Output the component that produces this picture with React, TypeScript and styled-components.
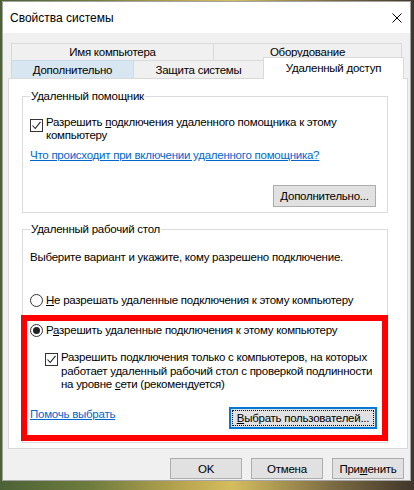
import React from "react";
import styled, { createGlobalStyle } from "styled-components";

const GlobalStyle = createGlobalStyle`
  html, body {
    margin: 0;
    padding: 0;
  }
  body {
    width: 414px;
    height: 490px;
    overflow: hidden;
    background: linear-gradient(
      to right,
      #4c6236 0%,
      #6f7c3e 22%,
      #b9a54f 44%,
      #d4bd5e 56%,
      #7d6c44 80%,
      #40362a 100%
    );
    font-family: "Liberation Sans", Arial, sans-serif;
    font-size: 11.5px;
    letter-spacing: -0.25px;
    color: #000;
  }
`;

const Window = styled.div`
  box-sizing: border-box;
  width: 409px;
  height: 480px;
  margin: 1px 0 0 2px;
  border: 1px solid #a3a3a3;
  background: #f0f0f0;
  display: flex;
  flex-direction: column;
`;

const TitleBar = styled.div`
  height: 31px;
  flex: none;
  background: #fff;
  display: flex;
  align-items: center;
  justify-content: space-between;
  padding: 0 8px 0 7px;
`;

const Title = styled.span`
  font-size: 12px;
  letter-spacing: 0;
  line-height: 14px;
`;

const Body = styled.div`
  padding: 10px 0 0 5px;
`;

const TabStrip = styled.div`
  margin-left: 3px;
  display: flex;
  flex-direction: column;
`;

const TabRow = styled.div<{ $h: number }>`
  display: flex;
  height: ${(p) => p.$h}px;
`;

const Tab = styled.div<{ $w: number; $active?: boolean; $hover?: boolean }>`
  box-sizing: border-box;
  width: ${(p) => p.$w}px;
  border: 1px solid ${(p) => (p.$hover ? "#c9d9e8" : "#d9d9d9")};
  border-bottom: none;
  background: ${(p) => (p.$active ? "#fff" : p.$hover ? "#d8e6f2" : "#f0f0f0")};
  display: flex;
  align-items: center;
  justify-content: center;
  white-space: nowrap;
  line-height: 14px;
  & + & {
    margin-left: -1px;
  }
  ${(p) =>
    p.$active &&
    `
    position: relative;
    z-index: 1;
    height: 22px;
    margin-top: -3px;
    padding-bottom: 1px;
  `}
`;

const Panel = styled.div`
  box-sizing: border-box;
  width: 400px;
  height: 371px;
  border: 1px solid #d9d9d9;
  background: #fff;
  padding-left: 13px;
  overflow: hidden;
`;

const Group = styled.fieldset<{ $top: number }>`
  box-sizing: border-box;
  width: 366px;
  margin: ${(p) => p.$top}px 0 0 0;
  padding: 0 7px 5px;
  border: 1px solid #dcdcdc;
  display: flex;
  flex-direction: column;
  min-width: 0;
`;

const Legend = styled.legend`
  padding: 0 1px;
  line-height: 14px;
`;

const Row = styled.div<{ $top: number; $indent?: number; $lh?: number }>`
  display: flex;
  align-items: flex-start;
  gap: 3px;
  margin-top: ${(p) => p.$top}px;
  margin-left: ${(p) => p.$indent || 0}px;
  line-height: ${(p) => p.$lh || 13}px;
  white-space: nowrap;
`;

const Text = styled.div<{ $top: number }>`
  margin-top: ${(p) => p.$top}px;
  line-height: 14px;
  white-space: nowrap;
`;

const Box = styled.span<{ $top: number }>`
  box-sizing: border-box;
  flex: none;
  width: 13px;
  height: 13px;
  margin-top: ${(p) => p.$top}px;
  border: 1px solid #333;
  background: #fff;
  display: flex;
  align-items: center;
  justify-content: center;
`;

const Radio = styled.span<{ $on?: boolean }>`
  box-sizing: border-box;
  flex: none;
  width: 13px;
  height: 13px;
  margin-top: 1px;
  border: 1px solid #333;
  border-radius: 50%;
  background: #fff;
  display: flex;
  align-items: center;
  justify-content: center;
  &::after {
    content: "";
    display: ${(p) => (p.$on ? "block" : "none")};
    width: 7px;
    height: 7px;
    border-radius: 50%;
    background: #222;
  }
`;

const Link = styled.a<{ $top: number }>`
  align-self: flex-start;
  margin-top: ${(p) => p.$top}px;
  line-height: 14px;
  color: #0066cc;
  text-decoration: underline;
  white-space: nowrap;
  cursor: pointer;
`;

const Button = styled.button<{ $w: number; $h?: number; $default?: boolean }>`
  box-sizing: border-box;
  width: ${(p) => p.$w}px;
  height: ${(p) => p.$h || 22}px;
  padding: 0;
  border: 1px solid ${(p) => (p.$default ? "#0078d7" : "#adadad")};
  background: #e1e1e1;
  font-family: inherit;
  font-size: 11.5px;
  letter-spacing: -0.25px;
  color: #000;
  white-space: nowrap;
  ${(p) =>
    p.$default &&
    `
    box-shadow: inset 0 0 0 1px #0078d7;
    outline: 1px dotted #111;
    outline-offset: -4px;
  `}
`;

const AdvancedButton = styled(Button)`
  align-self: flex-end;
  margin: 23px 4px 0 0;
`;

const Highlight = styled.div`
  margin: 8px -8px -4px -9px;
  border: 6px solid #f00;
  padding: 2px 5px 6px 3px;
  display: flex;
  flex-direction: column;
`;

const ActionRow = styled.div`
  display: flex;
  align-items: center;
  justify-content: space-between;
  margin-top: 15px;
`;

const Footer = styled.div`
  display: flex;
  justify-content: flex-end;
  gap: 9px;
  margin: 9px 6px 0 0;
`;

const CloseIcon = () => (
  <svg width="10" height="10" viewBox="0 0 10 10">
    <path d="M0.5 0.5 L9.5 9.5 M9.5 0.5 L0.5 9.5" stroke="#000" strokeWidth="1" fill="none" />
  </svg>
);

const Check = () => (
  <svg width="11" height="11" viewBox="0 0 11 11">
    <path d="M1.5 5.5 L4.2 8.5 L9.5 1.8" stroke="#222" strokeWidth="1.1" fill="none" />
  </svg>
);

export default function App() {
  return (
    <>
      <GlobalStyle />
      <Window>
        <TitleBar>
          <Title>Свойства системы</Title>
          <CloseIcon />
        </TitleBar>
        <Body>
          <TabStrip>
            <TabRow $h={17}>
              <Tab $w={203}>Имя компьютера</Tab>
              <Tab $w={189}>Оборудование</Tab>
            </TabRow>
            <TabRow $h={18}>
              <Tab $w={123} $hover>
                Дополнительно
              </Tab>
              <Tab $w={131}>Защита системы</Tab>
              <Tab $w={141} $active>
                Удаленный доступ
              </Tab>
            </TabRow>
          </TabStrip>
          <Panel>
            <Group $top={10}>
              <Legend>Удаленный помощник</Legend>
              <Row $top={13}>
                <Box $top={3}>
                  <Check />
                </Box>
                <span>
                  Разрешить <u>п</u>одключения удаленного помощника к этому
                  <br />
                  компьютеру
                </span>
              </Row>
              <Link $top={6}>Что происходит при включении удаленного помощника?</Link>
              <AdvancedButton $w={103}>
                <u>Д</u>ополнительно...
              </AdvancedButton>
            </Group>
            <Group $top={9}>
              <Legend>Удаленный рабочий стол</Legend>
              <Text $top={14}>Выберите вариант и укажите, кому разрешено подключение.</Text>
              <Row $top={29} $lh={14}>
                <Radio />
                <span>
                  <u>Н</u>е разрешать удаленные подключения к этому компьютеру
                </span>
              </Row>
              <Highlight>
                <Row $top={0} $lh={14}>
                  <Radio $on />
                  <span>
                    Р<u>а</u>зрешить удаленные подключения к этому компьютеру
                  </span>
                </Row>
                <Row $top={14} $indent={15} $lh={13.5}>
                  <Box $top={2}>
                    <Check />
                  </Box>
                  <span>
                    Разрешить подключения только с компьютеров, на которых
                    <br />
                    работает удаленный рабочий стол с проверкой подлинности
                    <br />
                    на уровне <u>с</u>ети (рекомендуется)
                  </span>
                </Row>
                <ActionRow>
                  <Link $top={0}>Помочь выбрать</Link>
                  <Button $w={148} $default>
                    <u>В</u>ыбрать пользователей...
                  </Button>
                </ActionRow>
              </Highlight>
            </Group>
          </Panel>
          <Footer>
            <Button $w={72} $h={21}>
              OK
            </Button>
            <Button $w={72} $h={21}>
              Отмена
            </Button>
            <Button $w={72} $h={21}>
              При<u>м</u>енить
            </Button>
          </Footer>
        </Body>
      </Window>
    </>
  );
}
